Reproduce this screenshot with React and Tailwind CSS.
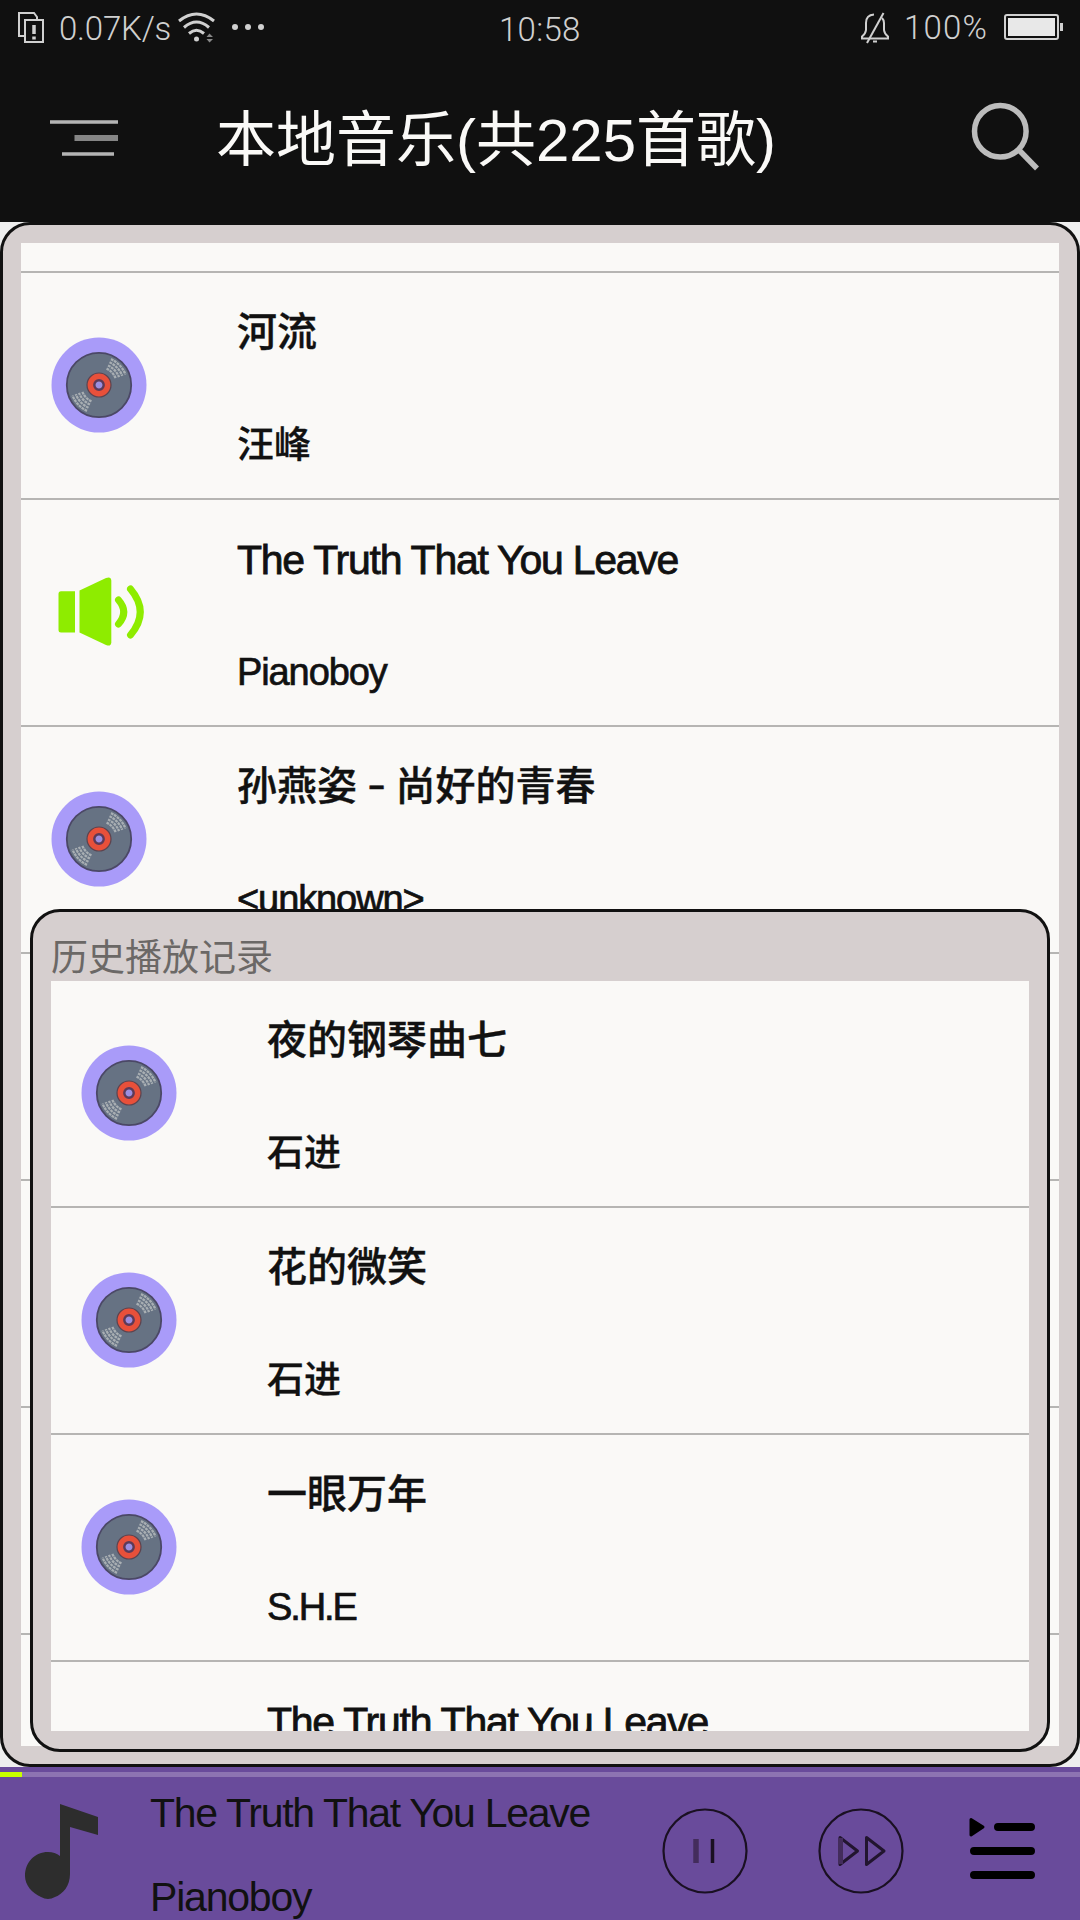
const PLAYLIST = [
  { title: "河流", artist: "汪峰" },
  { title: "The Truth That You Leave", artist: "Pianoboy", playing: true },
  { title: "孙燕姿 - 尚好的青春", artist: "<unknown>" },
  { title: "", artist: "", empty: true },
  { title: "", artist: "", empty: true },
  { title: "", artist: "", empty: true },
  { title: "", artist: "", empty: true },
];

const HISTORY = [
  { title: "夜的钢琴曲七", artist: "石进" },
  { title: "花的微笑", artist: "石进" },
  { title: "一眼万年", artist: "S.H.E", tight: true },
  { title: "The Truth That You Leave", artist: "", last: true },
];

function isCjk(text) {
  return /[\u4e00-\u9fff]/.test(text);
}

function DiscIcon() {
  const rings = [18, 21.5, 25, 28.5];
  return (
    <svg viewBox="-48 -48 96 96" className="size-24 shrink-0">
      <circle r="47.5" fill="#a99bf9" />
      <circle r="32.2" fill="#667283" stroke="#4b4866" strokeWidth="1.8" />
      <g fill="none" stroke="#a9afb3" strokeWidth="2.3" strokeDasharray="2.8 0.7">
        {rings.map((r) => (
          <g key={r}>
            <path d={`M${r * 0.42} ${-r * 0.9075}A${r} ${r} 0 0 1 ${r * 0.93} ${-r * 0.367}`} />
            <path d={`M${-r * 0.42} ${r * 0.9075}A${r} ${r} 0 0 1 ${-r * 0.93} ${r * 0.367}`} />
          </g>
        ))}
      </g>
      <circle r="12" fill="#e8503a" stroke="#5b4450" strokeWidth="1.2" />
      <circle r="4.7" fill="#9c8fe0" stroke="#5d3a58" strokeWidth="2.4" />
    </svg>
  );
}

function SpeakerIcon() {
  return (
    <svg viewBox="0 0 96 96" className="size-24 shrink-0" fill="#8eec00">
      <path d="M10 27.300H24V68.500H10Q7.500 68.500 7.500 66V30Q7.500 27.300 10 27.300Z" />
      <path d="M28.500 26.500L55 14Q60 12 60.300 16.500V78.500Q60 83 55 81L28.500 68.500Z" />
      <g fill="none" stroke="#8eec00" strokeWidth="7" strokeLinecap="round">
        <path d="M67.500 36Q78 48 67.500 60" />
        <path d="M79.500 25Q99 48 79.500 71" />
      </g>
    </svg>
  );
}

function SongTitle({ text }) {
  const [before, after] = text.split(" - ");
  if (!after) return text;
  return (
    <>
      {before} <span className="mx-[1.5px] inline-block -translate-y-[2px] scale-x-[1.4]">-</span> {after}
    </>
  );
}

function SongRow({ song }) {
  const cjk = isCjk(song.title);
  const cjkArtist = isCjk(song.artist);
  return (
    <li className="flex h-[227px] shrink-0 items-start border-b-2 border-[#b6b5b3] pl-[30px]">
      <div className="mt-16 size-24 shrink-0">
        {song.playing ? <SpeakerIcon /> : !song.empty && !song.last && <DiscIcon />}
      </div>
      <div className="flex h-full flex-col pt-8 pl-[90px] whitespace-pre text-[#111111]">
        <div
          className={
            cjk
              ? "h-14 text-[40px] leading-[54px] font-medium [-webkit-text-stroke:0.4px_#111]"
              : "h-14 text-[41px] leading-14 tracking-[-1.25px] [-webkit-text-stroke:0.8px_#111]"
          }
        >
          <SongTitle text={song.title} />
        </div>
        <div
          className={
            cjkArtist
              ? "mt-14 h-14 text-[37px] leading-[58px] font-medium [-webkit-text-stroke:0.3px_#111]"
              : song.tight
                ? "mt-14 h-14 text-[38px] leading-14 tracking-[-2.1px] [-webkit-text-stroke:0.7px_#111]"
                : "mt-14 h-14 text-[38px] leading-14 tracking-[-1.1px] [-webkit-text-stroke:0.7px_#111]"
          }
        >
          {song.artist}
        </div>
      </div>
    </li>
  );
}

function StatusBar() {
  return (
    <div className="flex h-[56px] items-center justify-between pr-[14px] pl-[18px] font-[Roboto] text-[33px] leading-[56px] font-light text-[#d0d0d0]">
      <div className="flex w-[481px] items-center">
        <svg viewBox="0 0 28 32" className="h-8 w-7" fill="none" stroke="#d0d0d0" strokeWidth="2">
          <path d="M6 24H1V1H16L19 5V8" />
          <rect x="7" y="8" width="18" height="22" />
          <path d="M16 13V22M16 24.500V27.500" strokeWidth="3.500" />
        </svg>
        <span className="ml-[13px] translate-y-[1px] tracking-[-0.2px]">0.07K/s</span>
        <svg viewBox="0 0 38 32" className="ml-[7px] h-8 w-[38px]" fill="none" stroke="#d0d0d0" strokeWidth="3">
          <path d="M1 9Q18.500 -5 36 9M6 15.500Q18.500 4.500 31 15.500M11 21.500Q18.500 15 26 21.500" />
          <circle cx="18.500" cy="27" r="2.500" fill="#d0d0d0" stroke="none" />
          <path d="M28.500 25L31.500 21.500L35 25ZM28.500 27L31.500 30.500L35 27Z" fill="#888" stroke="none" />
        </svg>
        <svg viewBox="0 0 34 8" className="ml-[15px] h-2 w-[34px]" fill="#d0d0d0">
          <circle cx="4" cy="3" r="3" />
          <circle cx="17" cy="3" r="3" />
          <circle cx="30" cy="3" r="3" />
        </svg>
      </div>
      <span className="w-[83px] translate-y-[2px] tracking-[0.3px]">10:58</span>
      <div className="flex w-[484px] items-center justify-end">
        <svg viewBox="0 0 30 32" className="h-8 w-[30px]" fill="none" stroke="#d0d0d0" strokeWidth="2">
          <path d="M14 2.500Q6 3 6 11V18Q5.500 22 2 24.500V26.500H28V24.500Q24.500 22 24 18V11Q24 8 22 6" />
          <path d="M7 31L23.500 1" />
          <path d="M13 29.500H17" />
        </svg>
        <span className="ml-[14px] tracking-[1.2px]">100%</span>
        <svg viewBox="0 0 62 28" className="ml-4 h-7 w-[62px]">
          <rect x="1" y="1" width="53" height="24" rx="2" fill="none" stroke="#d0d0d0" strokeWidth="2" />
          <rect x="3.500" y="3.500" width="48" height="19" fill="#e8e8e8" stroke="#101010" strokeWidth="1" />
          <rect x="56" y="9" width="3" height="8" fill="#d0d0d0" />
        </svg>
      </div>
    </div>
  );
}

function Header() {
  return (
    <div className="flex h-[166px] items-center pl-[49px]">
      <svg viewBox="0 0 72 40" className="h-10 w-[72px]" stroke="#b4b4b4" strokeWidth="3.6">
        <path d="M1 3H69" />
        <path d="M25.500 19H69" stroke="#858585" strokeWidth="6" />
        <path d="M13 35H65" />
      </svg>
      <h1 className="mt-1 ml-[95px] w-[560px] text-[60px] leading-[90px] whitespace-nowrap text-[#faf9f7]">
        本地音乐(共225首歌)
      </h1>
      <svg viewBox="0 0 76 80" className="ml-[191px] h-20 w-[76px]" fill="none" stroke="#bcbcbc" strokeWidth="5.5">
        <circle cx="33.300" cy="32.300" r="25.800" />
        <path d="M51.500 50.500L70 69.500" />
      </svg>
    </div>
  );
}

function Player() {
  return (
    <footer className="flex h-[153px] flex-col bg-[#694b9b] text-[41px] tracking-[-1.3px] text-[#111111]">
      <div className="mt-[5px] h-[5px] shrink-0 bg-[#8d74b2]">
        <div className="h-full w-[22px] bg-[#c8ff00]" />
      </div>
      <div className="flex h-[143px] items-start overflow-hidden pl-6">
        <svg viewBox="0 0 76 100" className="mt-[25px] h-[100px] w-[76px] shrink-0" fill="#2d2d2d">
          <path d="M36 2L74 15V33L46 25V72C46 84 39 92 31 95Q24 99 17 95C8 91 1 83 1 74C1 60 11 50 24 50Q31 50 36 54Z" />
        </svg>
        <div className="flex w-[511px] flex-col pl-[50px] whitespace-nowrap">
          <div className="mt-2 h-[56px] leading-[56px]">The Truth That You Leave</div>
          <div className="mt-7 h-[56px] leading-[56px] tracking-[-1.2px]">Pianoboy</div>
        </div>
        <div className="mt-[31px] flex h-[86px] items-center">
          <svg viewBox="-43 -43 86 86" className="ml-[51px] size-[86px]" fill="none" stroke="#1a1022">
            <circle r="41.500" strokeWidth="2.200" />
            <path d="M-9 -12V12" stroke="#432c5c" strokeWidth="5.500" />
            <path d="M7.500 -12V12" strokeWidth="3.500" />
          </svg>
          <svg viewBox="-43 -43 86 86" className="ml-[70px] size-[86px]" fill="none" stroke="#22152f" strokeLinejoin="round">
            <circle r="41.500" strokeWidth="2.200" stroke="#1a1022" />
            <path d="M-21 -13.500L-3.500 0L-21 13.500Z" strokeWidth="3" />
            <path d="M5.500 -13.500L23 0L5.500 13.500Z" strokeWidth="3" />
            <path d="M-20.500 -13V13" stroke="#432c5c" strokeWidth="5" />
          </svg>
          <svg viewBox="0 0 68 68" className="ml-[65px] size-[68px]" stroke="#000" strokeWidth="8" strokeLinecap="round">
            <path d="M2 2.500L14 10L2 18Z" strokeWidth="3" strokeLinejoin="round" />
            <path d="M29 10H62M5 34H62M5 58H62" />
          </svg>
        </div>
      </div>
    </footer>
  );
}

export default function App() {
  return (
    <div className="relative flex h-[1920px] w-[1080px] flex-col overflow-hidden bg-[#eeeeee] font-['Liberation_Sans','Noto_Sans_CJK_SC',sans-serif]">
      <header className="h-[222px] shrink-0 bg-[#101010]">
        <StatusBar />
        <Header />
      </header>
      <main className="relative h-[1545px] shrink-0 rounded-[30px] border-3 border-[#111111] bg-[#d6cfcf] p-[18px]">
        <ul className="flex h-full flex-col overflow-hidden bg-[#faf9f7]">
          <li className="h-[30px] shrink-0 border-b-2 border-[#b6b5b3]" />
          {PLAYLIST.map((song, i) => (
            <SongRow key={i} song={song} />
          ))}
        </ul>
        <section className="absolute top-[684px] left-[27px] flex h-[843px] w-[1020px] flex-col rounded-[30px] border-3 border-[#111111] bg-[#d6cfcf] p-[18px]">
          <h2 className="h-[51px] shrink-0 pt-[3px] text-[37px] leading-[51px] text-[#6b6866]">历史播放记录</h2>
          <ul className="flex grow flex-col overflow-hidden bg-[#faf9f7]">
            {HISTORY.map((song, i) => (
              <SongRow key={i} song={song} />
            ))}
          </ul>
        </section>
      </main>
      <Player />
    </div>
  );
}
